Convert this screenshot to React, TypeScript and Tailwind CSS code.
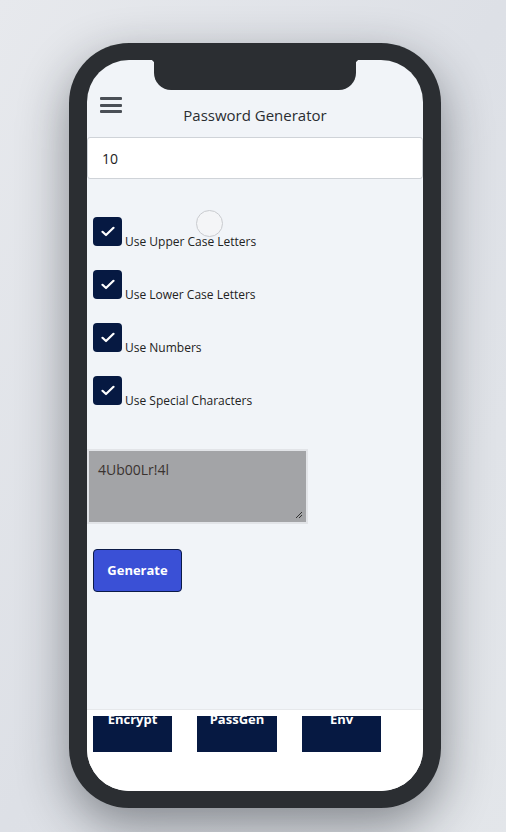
import React from "react";

const Check = () => (
  <svg width="14" height="11" viewBox="0 0 14 11" fill="none">
    <path d="M1.5 5.8 L5 9 L12.5 1.8" stroke="white" strokeWidth="2.2" strokeLinecap="round" strokeLinejoin="round" />
  </svg>
);

const Row = ({ label }: { label: string }) => (
  <div className="flex items-end h-[29px]">
    <div className="w-[29px] h-[29px] rounded-[4px] bg-[#061942] flex items-center justify-center shrink-0">
      <Check />
    </div>
    <span className="ml-[3px] text-[12px] leading-[12px] text-[#222] translate-y-[2px]">{label}</span>
  </div>
);

export default function App() {
  return (
    <div
      className="w-[506px] h-[832px] overflow-hidden flex justify-center pl-[4px] pt-[43px] bg-gradient-to-br from-[#e7e9ed] via-[#dde0e6] to-[#e3e6ea]"
      style={{ fontFamily: '"Open Sans", "Noto Sans", sans-serif' }}
    >
      <div className="relative w-[372px] h-[765px] rounded-[60px] bg-[#2b2e32] pt-[17px] pl-[18px] pr-[18px] pb-[17px] shadow-[0_18px_50px_rgba(20,24,32,0.45)]">
        <div className="relative w-[336px] h-[731px] rounded-[42px] overflow-hidden bg-[#f1f4f8] flex flex-col">
          <div className="absolute top-0 left-[67px] w-[202px] h-[30px] bg-[#2b2e32] rounded-b-[17px]" />
          <div className="absolute top-0 left-[63px] w-[4px] h-[4px] bg-[radial-gradient(circle_at_0_100%,transparent_4px,#2b2e32_4.5px)]" />
          <div className="absolute top-0 left-[269px] w-[4px] h-[4px] bg-[radial-gradient(circle_at_100%_100%,transparent_4px,#2b2e32_4.5px)]" />
          <div className="flex h-[77px] shrink-0">
            <div className="w-[35px] pl-[13px] pt-[37px] flex flex-col gap-[3.5px]">
              <div className="w-[22px] h-[3px] bg-[#4a4f56] rounded-[1px]" />
              <div className="w-[22px] h-[3px] bg-[#4a4f56] rounded-[1px]" />
              <div className="w-[22px] h-[3px] bg-[#4a4f56] rounded-[1px]" />
            </div>
            <div className="flex-1 text-center pt-[44px] text-[15px] leading-[22px] text-[#2a2d31]">
              Password Generator
            </div>
            <div className="w-[35px]" />
          </div>
          <div className="h-[42px] shrink-0 bg-white border border-[#cfd3d8] rounded-[3px] flex items-center pl-[14px] text-[14px] text-[#222]">
            10
          </div>
          <div className="relative flex-1 flex flex-col">
            <div className="absolute left-[109px] top-[31px] w-[27px] h-[27px] rounded-full border border-[#c9cbcf] bg-[#f4f5f7]" />
            <div className="pl-[6px] pt-[38px] flex flex-col gap-[24px]">
              <Row label="Use Upper Case Letters" />
              <Row label="Use Lower Case Letters" />
              <Row label="Use Numbers" />
              <Row label="Use Special Characters" />
            </div>
            <div className="mt-[44px] w-[221px] h-[75px] border-2 border-[#e2e4e8] bg-[#a3a4a7] pl-[9px] pt-[8px] text-[14px] text-[#3a3330] relative">
              4Ub00Lr!4l
              <svg className="absolute right-[3px] bottom-[3px]" width="9" height="9" viewBox="0 0 9 9">
                <path d="M8 2 L2 8 M8 5 L5 8" stroke="#333" strokeWidth="1" />
              </svg>
            </div>
            <div className="pl-[6px] mt-[25px]">
              <button className="w-[89px] h-[43px] bg-[#3a50d6] border border-[#0b1a48] rounded-[4px] text-white font-bold text-[13px]">
                Generate
              </button>
            </div>
          </div>
          <div className="h-[82px] shrink-0 bg-white border-t border-[#e6e8eb] flex pl-[6px] pt-[6px] gap-[25px]">
            <div className="w-[79px] h-[36px] bg-[#061942] flex justify-center text-white font-bold text-[13px] leading-[16px]"><span className="-mt-[5px]">Encrypt</span></div>
            <div className="w-[80px] h-[36px] bg-[#061942] flex justify-center text-white font-bold text-[13px] leading-[16px]"><span className="-mt-[5px]">PassGen</span></div>
            <div className="w-[79px] h-[36px] bg-[#061942] flex justify-center text-white font-bold text-[13px] leading-[16px]"><span className="-mt-[5px]">Env</span></div>
          </div>
        </div>
      </div>
    </div>
  );
}
